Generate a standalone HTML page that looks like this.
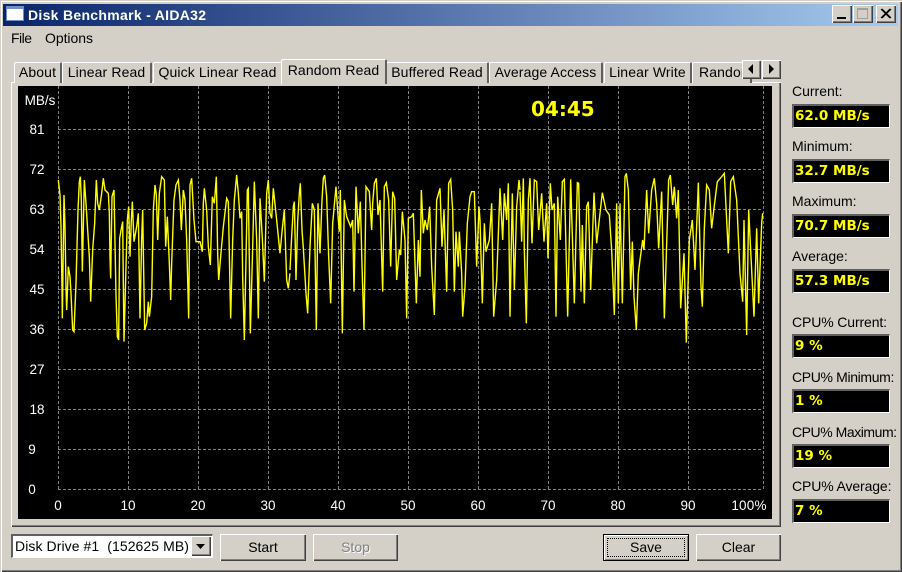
<!DOCTYPE html>
<html><head><meta charset="utf-8">
<style>
html,body{margin:0;padding:0;width:902px;height:572px;overflow:hidden;background:#d4d0c8}
*{box-sizing:border-box}
body{font-family:"Liberation Sans",sans-serif;font-size:14px;color:#000;position:relative}
.a{position:absolute;white-space:nowrap}
#win{position:absolute;left:0;top:0;width:902px;height:572px;box-shadow:inset 1px 1px 0 #d4d0c8,inset 2px 2px 0 #fff,inset -1px -1px 0 #404040,inset -2px -2px 0 #808080}
#title{left:3px;top:4px;width:895px;height:22px;background:linear-gradient(90deg,#0a246a,#a6caf0)}
.tt{left:28px;top:6px;color:#fff;font-weight:bold;font-size:14px;line-height:18px;letter-spacing:.3px}
.wb{background:#d4d0c8;top:5px;height:18px;box-shadow:inset 1px 1px 0 #fff,inset -1px -1px 0 #404040,inset -2px -2px 0 #808080}
.tab{top:62px;height:21px;background:#d4d0c8;border-left:1px solid #fff;border-top:1px solid #fff;border-right:2px solid #606060;border-radius:2px 2px 0 0;text-align:center;line-height:18px;overflow:hidden;letter-spacing:.12px}
.btn{top:534px;height:27px;background:#d4d0c8;box-shadow:inset 1px 1px 0 #fff,inset -1px -1px 0 #404040,inset -2px -2px 0 #808080;text-align:center;line-height:26px}
.lb{left:792px;line-height:16px;letter-spacing:0}
.c{letter-spacing:-.12px}
.v{left:792px;width:98px;height:24px;background:#000;border-left:2px solid #606060;border-top:2px solid #606060;border-right:1px solid #fff;border-bottom:1px solid #fff;color:#ff0;font-family:"DejaVu Sans",sans-serif;font-weight:bold;font-size:13.5px;line-height:21px;padding-left:1px}
.w{color:#fff;font-size:13.5px;line-height:16px;text-align:center;width:40px}
.ax{top:498px}
</style></head><body>
<div id="win"></div>
<div class="a" id="title"></div>
<div class="a" style="left:6px;top:6px;width:18px;height:15px;background:#fff;border:1px solid #6f8fc9;border-top:3px solid #6f8fc9"></div>
<div class="a tt">Disk Benchmark - AIDA32</div>

<div class="a wb" style="left:832px;width:20px"><div class="a" style="left:5px;top:12px;width:9px;height:2px;background:#000"></div></div>
<div class="a wb" style="left:853px;width:20px"><div class="a" style="left:4px;top:3px;width:11px;height:11px;border:1px solid #a0a0a0;border-top:2px solid #a0a0a0"></div></div>
<div class="a wb" style="left:876px;width:20px"><svg class="a" style="left:0;top:0" width="20" height="18"><path d="M5 4L14 13M6 4L15 13M14 4L5 13M15 4L6 13" stroke="#000" stroke-width="1.2" fill="none"/></svg></div>

<div class="a" style="left:11px;top:30px;line-height:17px;letter-spacing:-.5px">File</div>
<div class="a" style="left:45px;top:30px;line-height:17px;letter-spacing:-.05px">Options</div>

<div class="a" style="left:11px;top:82px;width:770px;height:445px;background:#d4d0c8;box-shadow:inset 1px 1px 0 #fff,inset -1px -1px 0 #404040,inset -2px -2px 0 #808080"></div>

<div class="a tab" style="left:14px;width:48px">About</div>
<div class="a tab" style="left:62px;width:90px">Linear Read</div>
<div class="a tab" style="left:153px;width:130px">Quick Linear Read</div>
<div class="a tab" style="left:386px;width:103px">Buffered Read</div>
<div class="a tab" style="left:489px;width:114px">Average Access</div>
<div class="a tab" style="left:604px;width:88px">Linear Write</div>
<div class="a tab" style="left:692px;width:60px;text-align:left;padding-left:6px">Random</div>
<div class="a tab" style="left:281px;top:59px;width:106px;height:25px;border-right:2px solid #606060;line-height:20px;z-index:2">Random Read</div>

<div class="a wb" style="left:742px;top:60px;width:19px;height:19px;z-index:3"><svg class="a" style="left:0;top:0" width="19" height="19"><path d="M11 4V14L6 9Z" fill="#000"/></svg></div>
<div class="a wb" style="left:762px;top:60px;width:19px;height:19px;z-index:3"><svg class="a" style="left:0;top:0" width="19" height="19"><path d="M7 4V14L12 9Z" fill="#000"/></svg></div>

<svg class="a" style="left:18px;top:86px;z-index:3" width="754" height="433" viewBox="18 86 754 433">
<rect x="18" y="86" width="754" height="433" fill="#000"/>
<g stroke="#808080" stroke-width="1" stroke-dasharray="3 2" shape-rendering="crispEdges" fill="none">
<path d="M58.5 86V489M128.5 86V489M198.5 86V489M268.5 86V489M338.5 86V489M408.5 86V489M478.5 86V489M548.5 86V489M618.5 86V489M688.5 86V489M763.5 86V489"/>
<path d="M58 129.5H763M58 169.5H763M58 209.5H763M58 249.5H763M58 289.5H763M58 329.5H763M58 369.5H763M58 409.5H763M58 449.5H763M58 489.5H763"/>
</g>
<g transform="translate(50 160) scale(.33333)" fill="none" stroke="#ff0" stroke-width="4.2" stroke-linejoin="miter">
<polyline points="25,60 30,105 33,200 36,385 37,475 42,105 45,200 48,385 50,450 55,320 60,350 63,400 68,510 72,515 78,370 84,150 88,65 91,50 94,120 97,335 103,60 108,130 113,210 118,290 122,425 128,270 134,190 139,60 143,130 148,150 155,100 160,55 165,90 175,100 178,160 180,290 182,355 186,110 192,90 195,250 198,405 202,530 206,540 209,235 214,205 218,185 222,545 228,320 232,180 236,140 240,290 244,180 247,125 252,245 260,200 265,160 270,475 275,235 278,150 284,510 290,490 295,425 298,470 305,410 310,150 315,75 319,105 323,240 328,100 335,50 343,60 347,260 352,170 358,310 362,420 365,310 372,120 378,75 385,60 390,120 394,210 400,90 405,120 410,240 416,475 420,75 425,55 432,180 438,245 450,245 457,275 460,130 463,85 470,150 475,260 481,315 487,110 493,130 499,50 503,280 506,360 512,290 520,200 530,115 535,125 540,385 542,475 548,240 553,120 560,45 565,100 570,175 575,155 578,350 583,540 588,300 592,90 595,85 601,520 607,300 613,65 620,240 625,475 630,115 637,235 643,365 650,100 655,60 660,160 665,175 670,85 680,180 690,280 697,205 703,150 710,360 715,385 720,340"/>
</g>
<g transform="translate(280 160) scale(.33333)" fill="none" stroke="#ff0" stroke-width="4.2">
<polyline points="30,330 35,230 40,140 43,125 48,360 53,185 58,100 61,70 66,210 70,265 78,400 83,460 90,260 97,130 103,150 109,510 114,130 120,280 126,120 130,55 134,45 140,110 146,290 152,430 158,190 168,80 175,180 178,215 181,90 187,520 193,120 200,170 212,200 218,180 222,395 228,80 235,220 241,125 247,350 252,510 258,80 268,95 275,210 278,130 283,70 289,55 294,165 300,120 308,395 313,80 319,68 326,120 332,320 338,95 344,115 350,360 358,270 362,285 367,155 375,240 380,475 385,175 395,170 400,160 409,430 415,240 420,350 424,90 430,220 435,180 442,210 449,140 455,320 463,465 470,120 480,85 486,260 492,150 500,395 506,70 512,58 518,150 523,395 528,215 535,320 538,215 545,340 548,470 555,380 562,190 570,110 575,95 583,95 590,320 597,140 600,180 607,430 613,190 618,275 628,240 635,130 641,470 650,360 660,85 668,240 673,100 680,180 685,70 690,470 697,100 703,390 710,140 717,60 720,90"/>
</g>
<g transform="translate(520 160) scale(.33333)" fill="none" stroke="#ff0" stroke-width="4.2">
<polyline points="0,95 5,245 10,55 13,270 19,490 25,120 30,55 36,250 43,60 50,65 56,210 65,100 72,245 80,130 84,295 91,70 96,150 103,130 108,470 113,110 121,240 127,65 133,58 143,470 152,58 163,430 172,68 176,70 183,395 187,195 193,430 200,140 205,125 212,390 222,98 230,250 240,160 247,98 258,150 268,165 275,270 283,465 290,130 295,430 300,130 307,430 315,50 319,40 325,90 332,390 337,245 342,410 349,510 355,340 360,300 368,240 372,270 380,90 386,220 395,90 403,55 410,130 416,265 425,95 433,475 446,60 451,45 458,135 463,80 470,175 475,90 482,445 492,280 499,548 508,240 517,180 525,330 535,68 543,380 547,440 553,205 560,75 568,90 575,205 585,120 592,65 605,50 613,40 625,280 632,65 640,50 650,120 660,340 668,425 672,180 680,525 686,150 693,290 702,470 710,205 716,430 725,190 728,160"/>
</g>
<text x="531" y="116" font-family="DejaVu Sans,sans-serif" font-weight="bold" font-size="20" fill="#ff0">04:45</text>
</svg>

<div style="position:absolute;left:0;top:0;z-index:4">
<div class="a w" style="left:20px;top:93px;width:40px">MB/s</div>
<div class="a w" style="left:17px;top:122px">81</div>
<div class="a w" style="left:17px;top:162px">72</div>
<div class="a w" style="left:17px;top:202px">63</div>
<div class="a w" style="left:17px;top:242px">54</div>
<div class="a w" style="left:17px;top:282px">45</div>
<div class="a w" style="left:17px;top:322px">36</div>
<div class="a w" style="left:17px;top:362px">27</div>
<div class="a w" style="left:17px;top:402px">18</div>
<div class="a w" style="left:12px;top:442px">9</div>
<div class="a w" style="left:12px;top:482px">0</div>
<div class="a w ax" style="left:38px">0</div>
<div class="a w ax" style="left:108px">10</div>
<div class="a w ax" style="left:178px">20</div>
<div class="a w ax" style="left:248px">30</div>
<div class="a w ax" style="left:318px">40</div>
<div class="a w ax" style="left:388px">50</div>
<div class="a w ax" style="left:458px">60</div>
<div class="a w ax" style="left:528px">70</div>
<div class="a w ax" style="left:598px">80</div>
<div class="a w ax" style="left:668px">90</div>
<div class="a w ax" style="left:729px;width:40px;letter-spacing:.2px">100%</div>
</div>

<div class="a" style="left:11px;top:534px;width:202px;height:24px;background:#fff;border-left:2px solid #606060;border-top:2px solid #606060;border-right:1px solid #fff;border-bottom:1px solid #fff;line-height:20px;padding-left:2px;letter-spacing:.08px">Disk Drive #1&nbsp; (152625 MB)</div>
<div class="a wb" style="left:191px;top:536px;width:20px;height:20px"><svg class="a" style="left:0;top:0" width="20" height="20"><path d="M5 8H14L9.5 13Z" fill="#000"/></svg></div>

<div class="a btn" style="left:220px;width:86px">Start</div>
<div class="a btn" style="left:313px;width:85px;color:#808080;text-shadow:1px 1px 0 #fff">Stop</div>
<div class="a btn" style="left:603px;width:86px;box-shadow:inset 0 0 0 1px #000,inset 2px 2px 0 #fff,inset -2px -2px 0 #808080">Save<div class="a" style="left:4px;top:4px;width:78px;height:19px;border:1px dotted #000"></div></div>
<div class="a btn" style="left:696px;width:85px">Clear</div>

<div class="a lb" style="top:83px">Current:</div>
<div class="a v" style="top:104px">62.0 MB/s</div>
<div class="a lb" style="top:138px">Minimum:</div>
<div class="a v" style="top:159px">32.7 MB/s</div>
<div class="a lb" style="top:193px">Maximum:</div>
<div class="a v" style="top:214px">70.7 MB/s</div>
<div class="a lb" style="top:248px">Average:</div>
<div class="a v" style="top:269px">57.3 MB/s</div>
<div class="a lb c" style="top:314px">CPU% Current:</div>
<div class="a v" style="top:334px">9 %</div>
<div class="a lb" style="top:369px;letter-spacing:-.35px">CPU% Minimum:</div>
<div class="a v" style="top:389px">1 %</div>
<div class="a lb" style="top:424px;letter-spacing:-.45px">CPU% Maximum:</div>
<div class="a v" style="top:444px">19 %</div>
<div class="a lb c" style="top:478px">CPU% Average:</div>
<div class="a v" style="top:499px">7 %</div>
</body></html>
